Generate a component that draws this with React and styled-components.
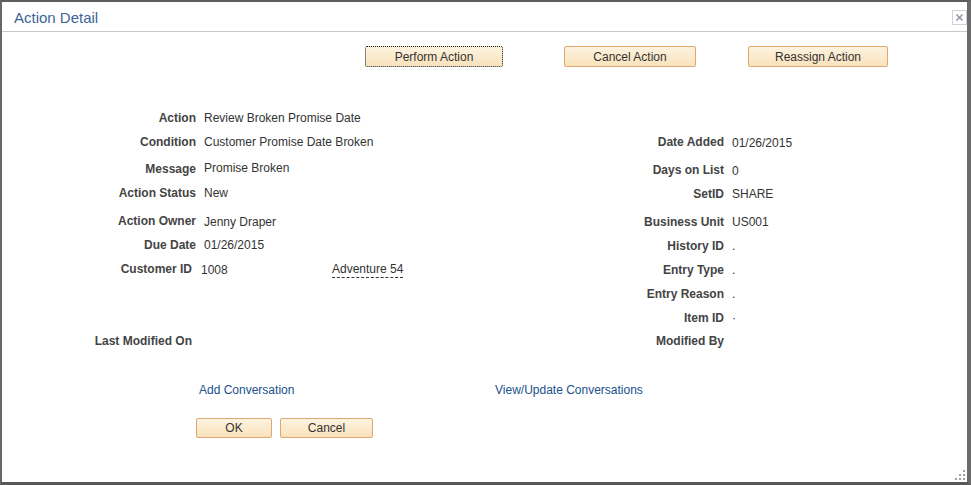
import React from "react";
import styled, { createGlobalStyle } from "styled-components";

const Global = createGlobalStyle`
  html, body { margin: 0; padding: 0; background: #fff; }
  body { width: 971px; height: 485px; overflow: hidden; font-family: Arial, "Liberation Sans", sans-serif; }
  * { box-sizing: border-box; }
`;

const Dialog = styled.div`
  position: relative;
  width: 971px;
  height: 485px;
  background: #fff;
  border-top: 2px solid #5c5c5c;
  border-left: 2px solid #676767;
  border-right: 4px solid #6b6b6b;
  border-bottom: 3px solid #575757;
  display: flex;
  flex-direction: column;
  font-family: Arial, "Liberation Sans", sans-serif;
  font-size: 12px;
  color: #333;
`;

const TitleBar = styled.div`
  height: 30px;
  border-bottom: 1px solid #c8c8cc;
  display: flex;
  align-items: center;
  justify-content: space-between;
  padding: 0 0 0 12px;
`;

const Title = styled.div`
  font-size: 15px;
  color: #3e6397;
  margin-top: 1px;
`;

const CloseBox = styled.div`
  width: 15px;
  height: 15px;
  border: 1px solid #cfd3d8;
  display: flex;
  align-items: center;
  justify-content: center;
  margin-top: 1px;
`;

const ButtonRow = styled.div`
  display: flex;
  margin-top: 14px;
  padding-left: 363px;
`;

const Btn = styled.button`
  height: ${(p) => p.$h || 21}px;
  width: ${(p) => p.$w}px;
  margin-left: ${(p) => p.$ml || 0}px;
  padding: 0;
  font-family: Arial, "Liberation Sans", sans-serif;
  font-size: 12px;
  color: #333;
  background: linear-gradient(#fdf3e0, #f9e2bb);
  border: 1px ${(p) => (p.$focus ? "dotted #1a1a1a" : "solid #dfa873")};
  border-radius: 2px;
  cursor: pointer;
`;

const Fields = styled.div`
  display: grid;
  grid-template-columns: 592px 1fr;
  margin-top: 39px;
`;

const Column = styled.div`
  display: flex;
  flex-direction: column;
`;

const Row = styled.div`
  display: flex;
  align-items: center;
  height: 24px;
  margin-top: ${(p) => p.$mt || 0}px;
`;

const Label = styled.div`
  width: ${(p) => p.$w}px;
  text-align: right;
  font-weight: bold;
  color: #444;
  margin-top: ${(p) => p.$dy || 0}px;
  flex: none;
`;

const Value = styled.div`
  margin-left: ${(p) => p.$gap || 8}px;
  width: ${(p) => (p.$w ? `${p.$w}px` : "auto")};
  margin-top: ${(p) => p.$dy || 0}px;
  color: #333;
  flex: none;
`;

const DashedLink = styled.span`
  color: #333;
  border-bottom: 1px dashed #333;
  padding-bottom: 1px;
  margin-top: 2px;
`;

const LinkRow = styled.div`
  display: grid;
  grid-template-columns: 296px auto;
  padding-left: 197px;
  margin-top: 29px;
  height: 16px;
  align-items: center;
`;

const Link = styled.a`
  color: #20508c;
  text-decoration: none;
  font-size: 12px;
`;

const FooterButtons = styled.div`
  display: flex;
  gap: 8px;
  padding-left: 194px;
  margin-top: 20px;
`;

const Grip = styled.svg`
  position: absolute;
  right: 1px;
  bottom: 1px;
`;

const LEFT_W = 194;
const RIGHT_W = 130;

const leftRows = [
  { label: "Action", value: "Review Broken Promise Date" },
  { label: "Condition", value: "Customer Promise Date Broken" },
  { label: "Message", value: "Promise Broken", mt: 2, ldy: 2, vdy: -1 },
  { label: "Action Status", value: "New", mt: 1 },
  { label: "Action Owner", value: "Jenny Draper", mt: 4, vdy: 2 },
  { label: "Due Date", value: "01/26/2015" },
];

const rightRows = [
  { label: "Date Added", value: "01/26/2015", mt: 24, vdy: 1 },
  { label: "Days on List", value: "0", mt: 4, vdy: 1 },
  { label: "SetID", value: "SHARE" },
  { label: "Business Unit", value: "US001", mt: 4 },
  { label: "History ID", value: "." },
  { label: "Entry Type", value: "." },
  { label: "Entry Reason", value: "." },
  { label: "Item ID", value: "·" },
  { label: "Modified By", value: "", mt: -1 },
];

export default function App() {
  return (
    <>
      <Global />
      <Dialog>
        <TitleBar>
          <Title>Action Detail</Title>
          <CloseBox>
            <svg width="9" height="9" viewBox="0 0 9 9">
              <path d="M1.5 1.5 L7.5 7.5 M7.5 1.5 L1.5 7.5" stroke="#8c99a8" strokeWidth="1.6" />
            </svg>
          </CloseBox>
        </TitleBar>

        <ButtonRow>
          <Btn $w={138} $focus>Perform Action</Btn>
          <Btn $w={132} $ml={61}>Cancel Action</Btn>
          <Btn $w={140} $ml={52}>Reassign Action</Btn>
        </ButtonRow>

        <Fields>
          <Column>
            {leftRows.map((r) => (
              <Row key={r.label} $mt={r.mt}>
                <Label $w={LEFT_W} $dy={r.ldy}>{r.label}</Label>
                <Value $dy={r.vdy}>{r.value}</Value>
              </Row>
            ))}
            <Row>
              <Label $w={190}>Customer ID</Label>
              <Value $gap={9} $w={131} $dy={2}>1008</Value>
              <DashedLink>Adventure 54</DashedLink>
            </Row>
            <Row $mt={48}>
              <Label $w={190}>Last Modified On</Label>
            </Row>
          </Column>
          <Column>
            {rightRows.map((r) => (
              <Row key={r.label} $mt={r.mt}>
                <Label $w={RIGHT_W}>{r.label}</Label>
                <Value $dy={r.vdy}>{r.value}</Value>
              </Row>
            ))}
          </Column>
        </Fields>

        <LinkRow>
          <Link href="#">Add Conversation</Link>
          <Link href="#">View/Update Conversations</Link>
        </LinkRow>

        <FooterButtons>
          <Btn $w={76} $h={20}>OK</Btn>
          <Btn $w={93} $h={20}>Cancel</Btn>
        </FooterButtons>

        <Grip width="11" height="11" viewBox="0 0 11 11">
          <g fill="#a0a0a0">
            <rect x="8" y="0" width="2" height="2" />
            <rect x="4" y="4" width="2" height="2" />
            <rect x="8" y="4" width="2" height="2" />
            <rect x="0" y="8" width="2" height="2" />
            <rect x="4" y="8" width="2" height="2" />
            <rect x="8" y="8" width="2" height="2" />
          </g>
        </Grip>
      </Dialog>
    </>
  );
}
